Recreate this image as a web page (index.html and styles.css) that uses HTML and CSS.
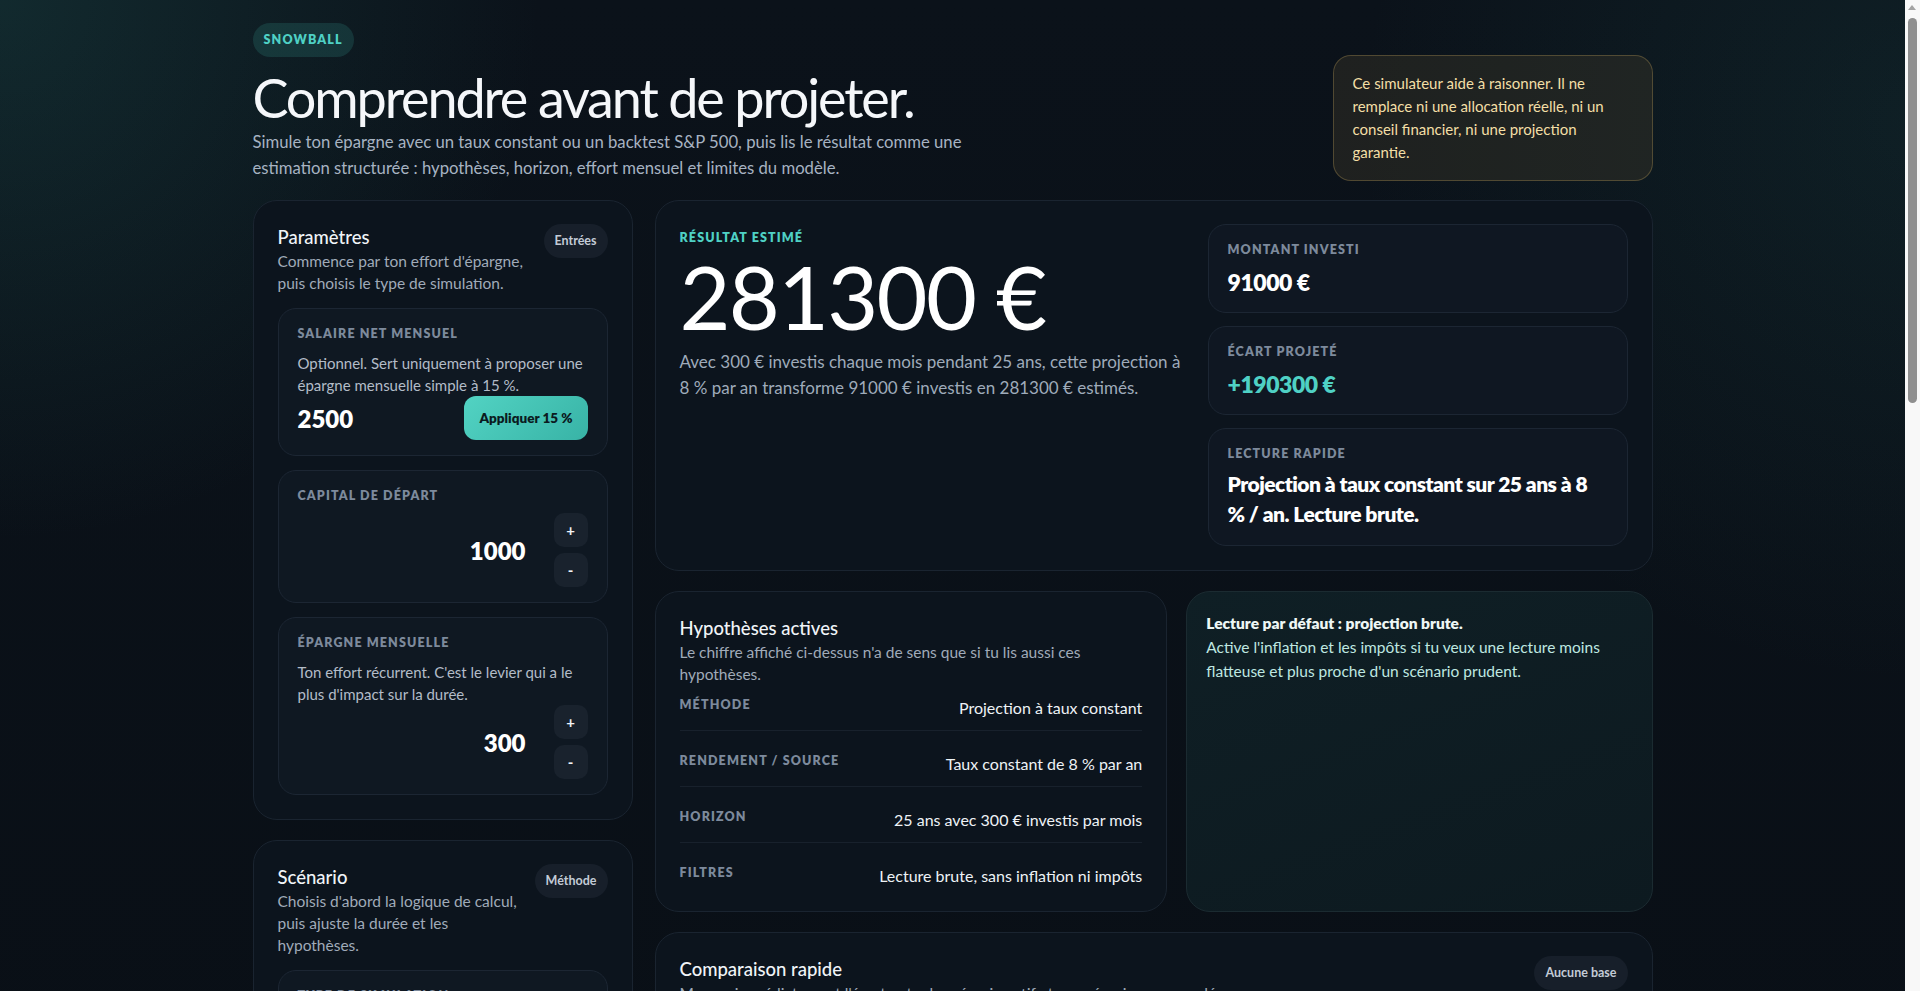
FILE: index.html
```html
<!DOCTYPE html>
<html lang="fr">
<head>
    <meta charset="UTF-8">
    <meta name="viewport" content="width=device-width, initial-scale=1.0">
    <title>Snowball - Simulateur d'épargne</title>
    <link rel="stylesheet" href="styles.css">
</head>
<body>
    <div class="page">
        <header class="hero">
            <div class="hero-text">
                <span class="tag">SNOWBALL</span>
                <h1>Comprendre avant de projeter.</h1>
                <p>Simule ton épargne avec un taux constant ou un backtest S&amp;P 500, puis lis le résultat comme une estimation structurée : hypothèses, horizon, effort mensuel et limites du modèle.</p>
            </div>
            <aside class="disclaimer">Ce simulateur aide à raisonner. Il ne remplace ni une allocation réelle, ni un conseil financier, ni une projection garantie.</aside>
        </header>

        <div class="layout">
            <div class="sidebar">
                <section class="panel">
                    <div class="panel-head">
                        <div>
                            <h2>Paramètres</h2>
                            <p>Commence par ton effort d'épargne, puis choisis le type de simulation.</p>
                        </div>
                        <span class="chip">Entrées</span>
                    </div>

                    <div class="field">
                        <div class="field-label">Salaire net mensuel</div>
                        <p class="field-help">Optionnel. Sert uniquement à proposer une épargne mensuelle simple à 15 %.</p>
                        <div class="field-row">
                            <span class="value-input left">2500</span>
                            <button class="apply-btn">Appliquer 15 %</button>
                        </div>
                    </div>

                    <div class="field">
                        <div class="field-label">Capital de départ</div>
                        <div class="field-row stepper-row">
                            <span class="value-input">1000</span>
                            <div class="stepper">
                                <button>+</button>
                                <button>-</button>
                            </div>
                        </div>
                    </div>

                    <div class="field">
                        <div class="field-label">Épargne mensuelle</div>
                        <p class="field-help">Ton effort récurrent. C'est le levier qui a le plus d'impact sur la durée.</p>
                        <div class="field-row stepper-row">
                            <span class="value-input">300</span>
                            <div class="stepper">
                                <button>+</button>
                                <button>-</button>
                            </div>
                        </div>
                    </div>
                </section>

                <section class="panel">
                    <div class="panel-head">
                        <div>
                            <h2>Scénario</h2>
                            <p>Choisis d'abord la logique de calcul, puis ajuste la durée et les hypothèses.</p>
                        </div>
                        <span class="chip">Méthode</span>
                    </div>

                    <div class="field">
                        <div class="field-label">Type de simulation</div>
                        <div class="segmented">
                            <button class="active">Taux constant</button>
                            <button>Backtest S&amp;P 500</button>
                        </div>
                    </div>

                    <div class="field">
                        <div class="field-label">Durée</div>
                        <p class="field-help">Nombre d'années pendant lesquelles tu investis chaque mois.</p>
                        <div class="field-row stepper-row">
                            <span class="value-input">25</span>
                            <div class="stepper">
                                <button>+</button>
                                <button>-</button>
                            </div>
                        </div>
                    </div>

                    <div class="field">
                        <div class="field-label">Rendement annuel</div>
                        <p class="field-help">Hypothèse moyenne, avant frais, inflation et fiscalité.</p>
                        <div class="field-row stepper-row">
                            <span class="value-input">8</span>
                            <div class="stepper">
                                <button>+</button>
                                <button>-</button>
                            </div>
                        </div>
                    </div>

                    <div class="field">
                        <div class="field-label">Filtres</div>
                        <label class="toggle"><span class="switch"></span>Intégrer l'inflation (2 % / an)</label>
                        <label class="toggle"><span class="switch"></span>Appliquer la flat tax (30 %)</label>
                    </div>
                </section>
            </div>

            <main class="results">
                <section class="card result">
                    <div class="result-main">
                        <div class="eyebrow">Résultat estimé</div>
                        <div class="big-number">281300 €</div>
                        <p class="result-text">Avec 300 € investis chaque mois pendant 25 ans, cette projection à 8 % par an transforme 91000 € investis en 281300 € estimés.</p>
                    </div>
                    <div class="stats">
                        <div class="stat">
                            <div class="field-label">Montant investi</div>
                            <div class="stat-value">91000 €</div>
                        </div>
                        <div class="stat">
                            <div class="field-label">Écart projeté</div>
                            <div class="stat-value teal">+190300 €</div>
                        </div>
                        <div class="stat">
                            <div class="field-label">Lecture rapide</div>
                            <div class="stat-text">Projection à taux constant sur 25 ans à 8 % / an. Lecture brute.</div>
                        </div>
                    </div>
                </section>

                <div class="duo">
                    <section class="card">
                        <h2>Hypothèses actives</h2>
                        <p class="card-desc">Le chiffre affiché ci-dessus n'a de sens que si tu lis aussi ces hypothèses.</p>
                        <div class="facts">
                            <div class="fact"><span class="field-label">Méthode</span><span class="fact-value">Projection à taux constant</span></div>
                            <div class="fact"><span class="field-label">Rendement / source</span><span class="fact-value">Taux constant de 8 % par an</span></div>
                            <div class="fact"><span class="field-label">Horizon</span><span class="fact-value">25 ans avec 300 € investis par mois</span></div>
                            <div class="fact"><span class="field-label">Filtres</span><span class="fact-value">Lecture brute, sans inflation ni impôts</span></div>
                        </div>
                    </section>
                    <section class="note">
                        <strong>Lecture par défaut : projection brute.</strong>
                        Active l'inflation et les impôts si tu veux une lecture moins flatteuse et plus proche d'un scénario prudent.
                    </section>
                </div>

                <section class="card">
                    <div class="panel-head">
                        <div>
                            <h2>Comparaison rapide</h2>
                            <p>Mesure immédiatement l'écart entre le scénario actif et un scénario sauvegardé.</p>
                        </div>
                        <span class="chip">Aucune base</span>
                    </div>
                    <div class="compare-actions">
                        <button class="ghost-btn">Sauvegarder comme base</button>
                        <span class="muted">Aucun scénario de référence pour l'instant.</span>
                    </div>
                </section>

                <section class="card">
                    <div class="panel-head">
                        <div>
                            <h2>Évolution du capital</h2>
                            <p>Capital investi cumulé et valeur projetée, année après année.</p>
                        </div>
                        <span class="chip">25 ans</span>
                    </div>
                    <svg class="chart" viewBox="0 0 940 320" preserveAspectRatio="none">
                        <g stroke="#1a2430" stroke-width="1">
                            <line x1="0" y1="40" x2="940" y2="40"/>
                            <line x1="0" y1="110" x2="940" y2="110"/>
                            <line x1="0" y1="180" x2="940" y2="180"/>
                            <line x1="0" y1="250" x2="940" y2="250"/>
                            <line x1="0" y1="319" x2="940" y2="319"/>
                        </g>
                        <path d="M0 318 C 200 300, 420 260, 600 200 S 860 70, 940 36 L940 320 L0 320 Z" fill="rgba(79,209,197,0.12)"/>
                        <path d="M0 318 C 200 300, 420 260, 600 200 S 860 70, 940 36" fill="none" stroke="#4fd1c5" stroke-width="2.5"/>
                        <path d="M0 318 L940 216" fill="none" stroke="#7b889a" stroke-width="2" stroke-dasharray="6 6"/>
                    </svg>
                    <div class="legend">
                        <span><i class="dot teal-dot"></i>Valeur projetée</span>
                        <span><i class="dot grey-dot"></i>Montant investi</span>
                    </div>
                </section>

                <section class="card">
                    <div class="panel-head">
                        <div>
                            <h2>Détail par année</h2>
                            <p>Un point de repère tous les cinq ans.</p>
                        </div>
                        <span class="chip">Tableau</span>
                    </div>
                    <div class="table">
                        <div class="table-row head"><span>Année</span><span>Investi</span><span>Valeur</span><span>Gains</span></div>
                        <div class="table-row"><span>5</span><span>19000 €</span><span>23500 €</span><span>+4500 €</span></div>
                        <div class="table-row"><span>10</span><span>37000 €</span><span>57100 €</span><span>+20100 €</span></div>
                        <div class="table-row"><span>15</span><span>55000 €</span><span>107000 €</span><span>+52000 €</span></div>
                        <div class="table-row"><span>20</span><span>73000 €</span><span>180800 €</span><span>+107800 €</span></div>
                        <div class="table-row"><span>25</span><span>91000 €</span><span>281300 €</span><span>+190300 €</span></div>
                    </div>
                </section>
            </main>
        </div>
    </div>

    <!-- barre de défilement de la fenêtre -->
    <div class="scrollbar" aria-hidden="true">
        <span class="scroll-arrow"></span>
        <span class="scroll-thumb"></span>
    </div>
</body>
</html>
```

FILE: styles.css
```css
* {
    margin: 0;
    padding: 0;
    box-sizing: border-box;
}
body {
    font-family: 'Lato', 'Inter', sans-serif;
    color: #e8edf3;
    padding-right: 15px;
    background:
        radial-gradient(circle at 0% 0%, rgba(38, 110, 104, 0.26) 0, transparent 540px),
        radial-gradient(circle at 100% 6%, rgba(38, 110, 104, 0.15) 0, transparent 560px),
        linear-gradient(180deg, #0b121a 0%, #080d13 100%);
    background-color: #080d13;
    min-height: 100vh;
}
button {
    font-family: inherit;
    border: none;
    cursor: pointer;
}
.page {
    max-width: 1400px;
    margin: 0 auto;
    padding: 23px 0 80px;
}

/* en-tête */
.hero {
    display: flex;
    justify-content: space-between;
    align-items: flex-end;
    margin-bottom: 19px;
}
.tag {
    display: inline-block;
    padding: 9px 11px;
    border-radius: 999px;
    background: rgba(54, 160, 148, 0.2);
    color: #4fd1c5;
    font-size: 12.5px;
    font-weight: 800;
    letter-spacing: 0.09em;
    line-height: 16px;
}
.hero h1 {
    margin-top: 12px;
    font-size: 54px;
    font-weight: 400;
    line-height: 58px;
    letter-spacing: -0.04em;
    color: #f5f7fa;
}
.hero p {
    max-width: 730px;
    margin-top: 2px;
    font-size: 16.7px;
    line-height: 26px;
    color: #a7b3c2;
}
.disclaimer {
    width: 320px;
    padding: 16px 19px;
    border-radius: 18px;
    border: 1px solid rgba(190, 160, 90, 0.32);
    background: rgba(60, 55, 40, 0.42);
    color: #f3dfa6;
    font-size: 15px;
    line-height: 23px;
}

.layout {
    display: grid;
    grid-template-columns: 380px 1fr;
    gap: 22px;
    align-items: start;
}
.sidebar, .results {
    display: flex;
    flex-direction: column;
    gap: 20px;
}

/* panneaux */
.panel, .card {
    background: #0c141d;
    border: 1px solid #1a2430;
    border-radius: 24px;
    padding: 23px 24px 24px;
}
.panel-head {
    display: flex;
    justify-content: space-between;
    align-items: flex-start;
    gap: 12px;
}
h2 {
    font-size: 18.5px;
    font-weight: 500;
    line-height: 26px;
    color: #f1f4f8;
}
.panel-head p, .card-desc {
    font-size: 15.5px;
    line-height: 22px;
    color: #a0abb9;
}
.chip {
    flex-shrink: 0;
    padding: 9px 11px;
    border-radius: 999px;
    background: #171f2a;
    color: #c3cbd6;
    font-size: 12.5px;
    font-weight: 700;
    line-height: 16px;
}

.field {
    margin-top: 14px;
    padding: 17px 19px 15px;
    background: #0f1822;
    border: 1px solid #1c2633;
    border-radius: 18px;
}
.field-label {
    font-size: 12.5px;
    font-weight: 800;
    line-height: 16px;
    letter-spacing: 0.09em;
    text-transform: uppercase;
    color: #7d8a9c;
}
.field-help {
    margin-top: 10px;
    font-size: 15px;
    line-height: 22px;
    color: #b3bcc8;
}
.field-row {
    display: flex;
    align-items: center;
    justify-content: space-between;
}
.stepper-row {
    margin-top: 9px;
    gap: 28px;
}
.field-help + .stepper-row {
    margin-top: 0;
}
.value-input {
    flex: 1;
    text-align: right;
    font-size: 24px;
    font-weight: 800;
    color: #ffffff;
}
.value-input.left {
    text-align: left;
}
.apply-btn {
    height: 44px;
    padding: 0 15px;
    border-radius: 12px;
    background: linear-gradient(135deg, #52d3c3 0%, #38b3a6 100%);
    color: #0b1b1f;
    font-size: 13.5px;
    font-weight: 800;
}
.stepper {
    display: flex;
    flex-direction: column;
    gap: 6px;
}
.stepper button {
    width: 34px;
    height: 34px;
    border-radius: 10px;
    background: #19222d;
    color: #f1f4f8;
    font-size: 15px;
    font-weight: 700;
}

.segmented {
    margin-top: 12px;
    display: grid;
    grid-template-columns: 1fr 1fr;
    gap: 6px;
    padding: 4px;
    border-radius: 12px;
    background: #0b121a;
}
.segmented button {
    height: 38px;
    border-radius: 9px;
    background: transparent;
    color: #a0abb9;
    font-size: 13px;
    font-weight: 700;
}
.segmented button.active {
    background: #1b2733;
    color: #ffffff;
}
.toggle {
    display: flex;
    align-items: center;
    gap: 10px;
    margin-top: 12px;
    font-size: 14px;
    color: #c3cbd6;
}
.switch {
    width: 34px;
    height: 20px;
    border-radius: 999px;
    background: #222c38;
    position: relative;
}
.switch::after {
    content: "";
    position: absolute;
    top: 3px;
    left: 3px;
    width: 14px;
    height: 14px;
    border-radius: 50%;
    background: #7d8a9c;
}

/* résultat */
.result {
    display: grid;
    grid-template-columns: 1fr 420px;
    gap: 18px;
}
.result-main {
    padding-top: 6px;
}
.eyebrow {
    font-size: 12.5px;
    font-weight: 800;
    line-height: 16px;
    letter-spacing: 0.09em;
    text-transform: uppercase;
    color: #4fd1c5;
}
.big-number {
    margin-top: 6px;
    font-size: 88px;
    font-weight: 400;
    line-height: 88px;
    letter-spacing: -0.02em;
    color: #ffffff;
}
.result-text {
    margin-top: 9px;
    font-size: 17px;
    line-height: 26px;
    color: #9fabba;
}
.stats {
    display: flex;
    flex-direction: column;
    gap: 13px;
}
.stat {
    padding: 17px 19px 16px;
    background: #0f1722;
    border: 1px solid #1c2633;
    border-radius: 18px;
}
.stat-value {
    margin-top: 10px;
    font-size: 23px;
    font-weight: 800;
    line-height: 28px;
    letter-spacing: -0.02em;
    color: #ffffff;
}
.stat-value.teal {
    color: #4fd1c5;
}
.stat-text {
    margin-top: 7px;
    font-size: 21px;
    font-weight: 800;
    line-height: 30px;
    letter-spacing: -0.025em;
    color: #ffffff;
}

.duo {
    display: grid;
    grid-template-columns: 1.1fr 1fr;
    gap: 19px;
}
.facts {
    display: flex;
    flex-direction: column;
    gap: 11px;
    margin-top: 1px;
}
.fact {
    display: flex;
    justify-content: space-between;
    align-items: flex-start;
    padding: 11px 0;
    border-bottom: 1px solid #18212c;
}
.fact:last-child {
    border-bottom: none;
    padding-bottom: 0;
}
.fact-value {
    font-size: 16px;
    line-height: 22px;
    color: #eef2f6;
}
.note {
    padding: 19px;
    border-radius: 24px;
    border: 1px solid #1b2b31;
    background: linear-gradient(160deg, #0f1f25 0%, #0d1a20 100%);
    color: #bfe8e1;
    font-size: 15.5px;
    line-height: 24px;
}
.note strong {
    display: block;
    color: #eef7f5;
    font-weight: 800;
}

.compare-actions {
    display: flex;
    align-items: center;
    gap: 16px;
    margin-top: 18px;
}
.ghost-btn {
    height: 40px;
    padding: 0 16px;
    border-radius: 12px;
    background: #19222d;
    color: #e8edf3;
    font-size: 13px;
    font-weight: 700;
}
.muted {
    font-size: 14px;
    color: #7d8a9c;
}
.chart {
    display: block;
    width: 100%;
    height: 320px;
    margin-top: 20px;
}
.legend {
    display: flex;
    gap: 22px;
    margin-top: 14px;
    font-size: 14px;
    color: #a0abb9;
}
.dot {
    display: inline-block;
    width: 10px;
    height: 10px;
    border-radius: 50%;
    margin-right: 8px;
}
.teal-dot {
    background: #4fd1c5;
}
.grey-dot {
    background: #7d8a9c;
}
.table {
    margin-top: 16px;
}
.table-row {
    display: grid;
    grid-template-columns: 1fr 1fr 1fr 1fr;
    padding: 12px 0;
    border-bottom: 1px solid #18212c;
    font-size: 15px;
    color: #e8edf3;
}
.table-row.head {
    font-size: 12px;
    font-weight: 800;
    letter-spacing: 0.08em;
    text-transform: uppercase;
    color: #7d8a9c;
}

/* barre de défilement, par-dessus le bord droit */
.scrollbar {
    position: fixed;
    top: 0;
    right: 0;
    width: 15px;
    height: 100vh;
    background: #f8f8f8;
}
.scroll-arrow {
    position: absolute;
    top: 5px;
    left: 3px;
    border-left: 4.5px solid transparent;
    border-right: 4.5px solid transparent;
    border-bottom: 5px solid #a3a3a3;
}
.scroll-thumb {
    position: absolute;
    top: 18px;
    left: 3px;
    width: 9px;
    height: 385px;
    border-radius: 5px;
    background: #8f8f8f;
}
```
